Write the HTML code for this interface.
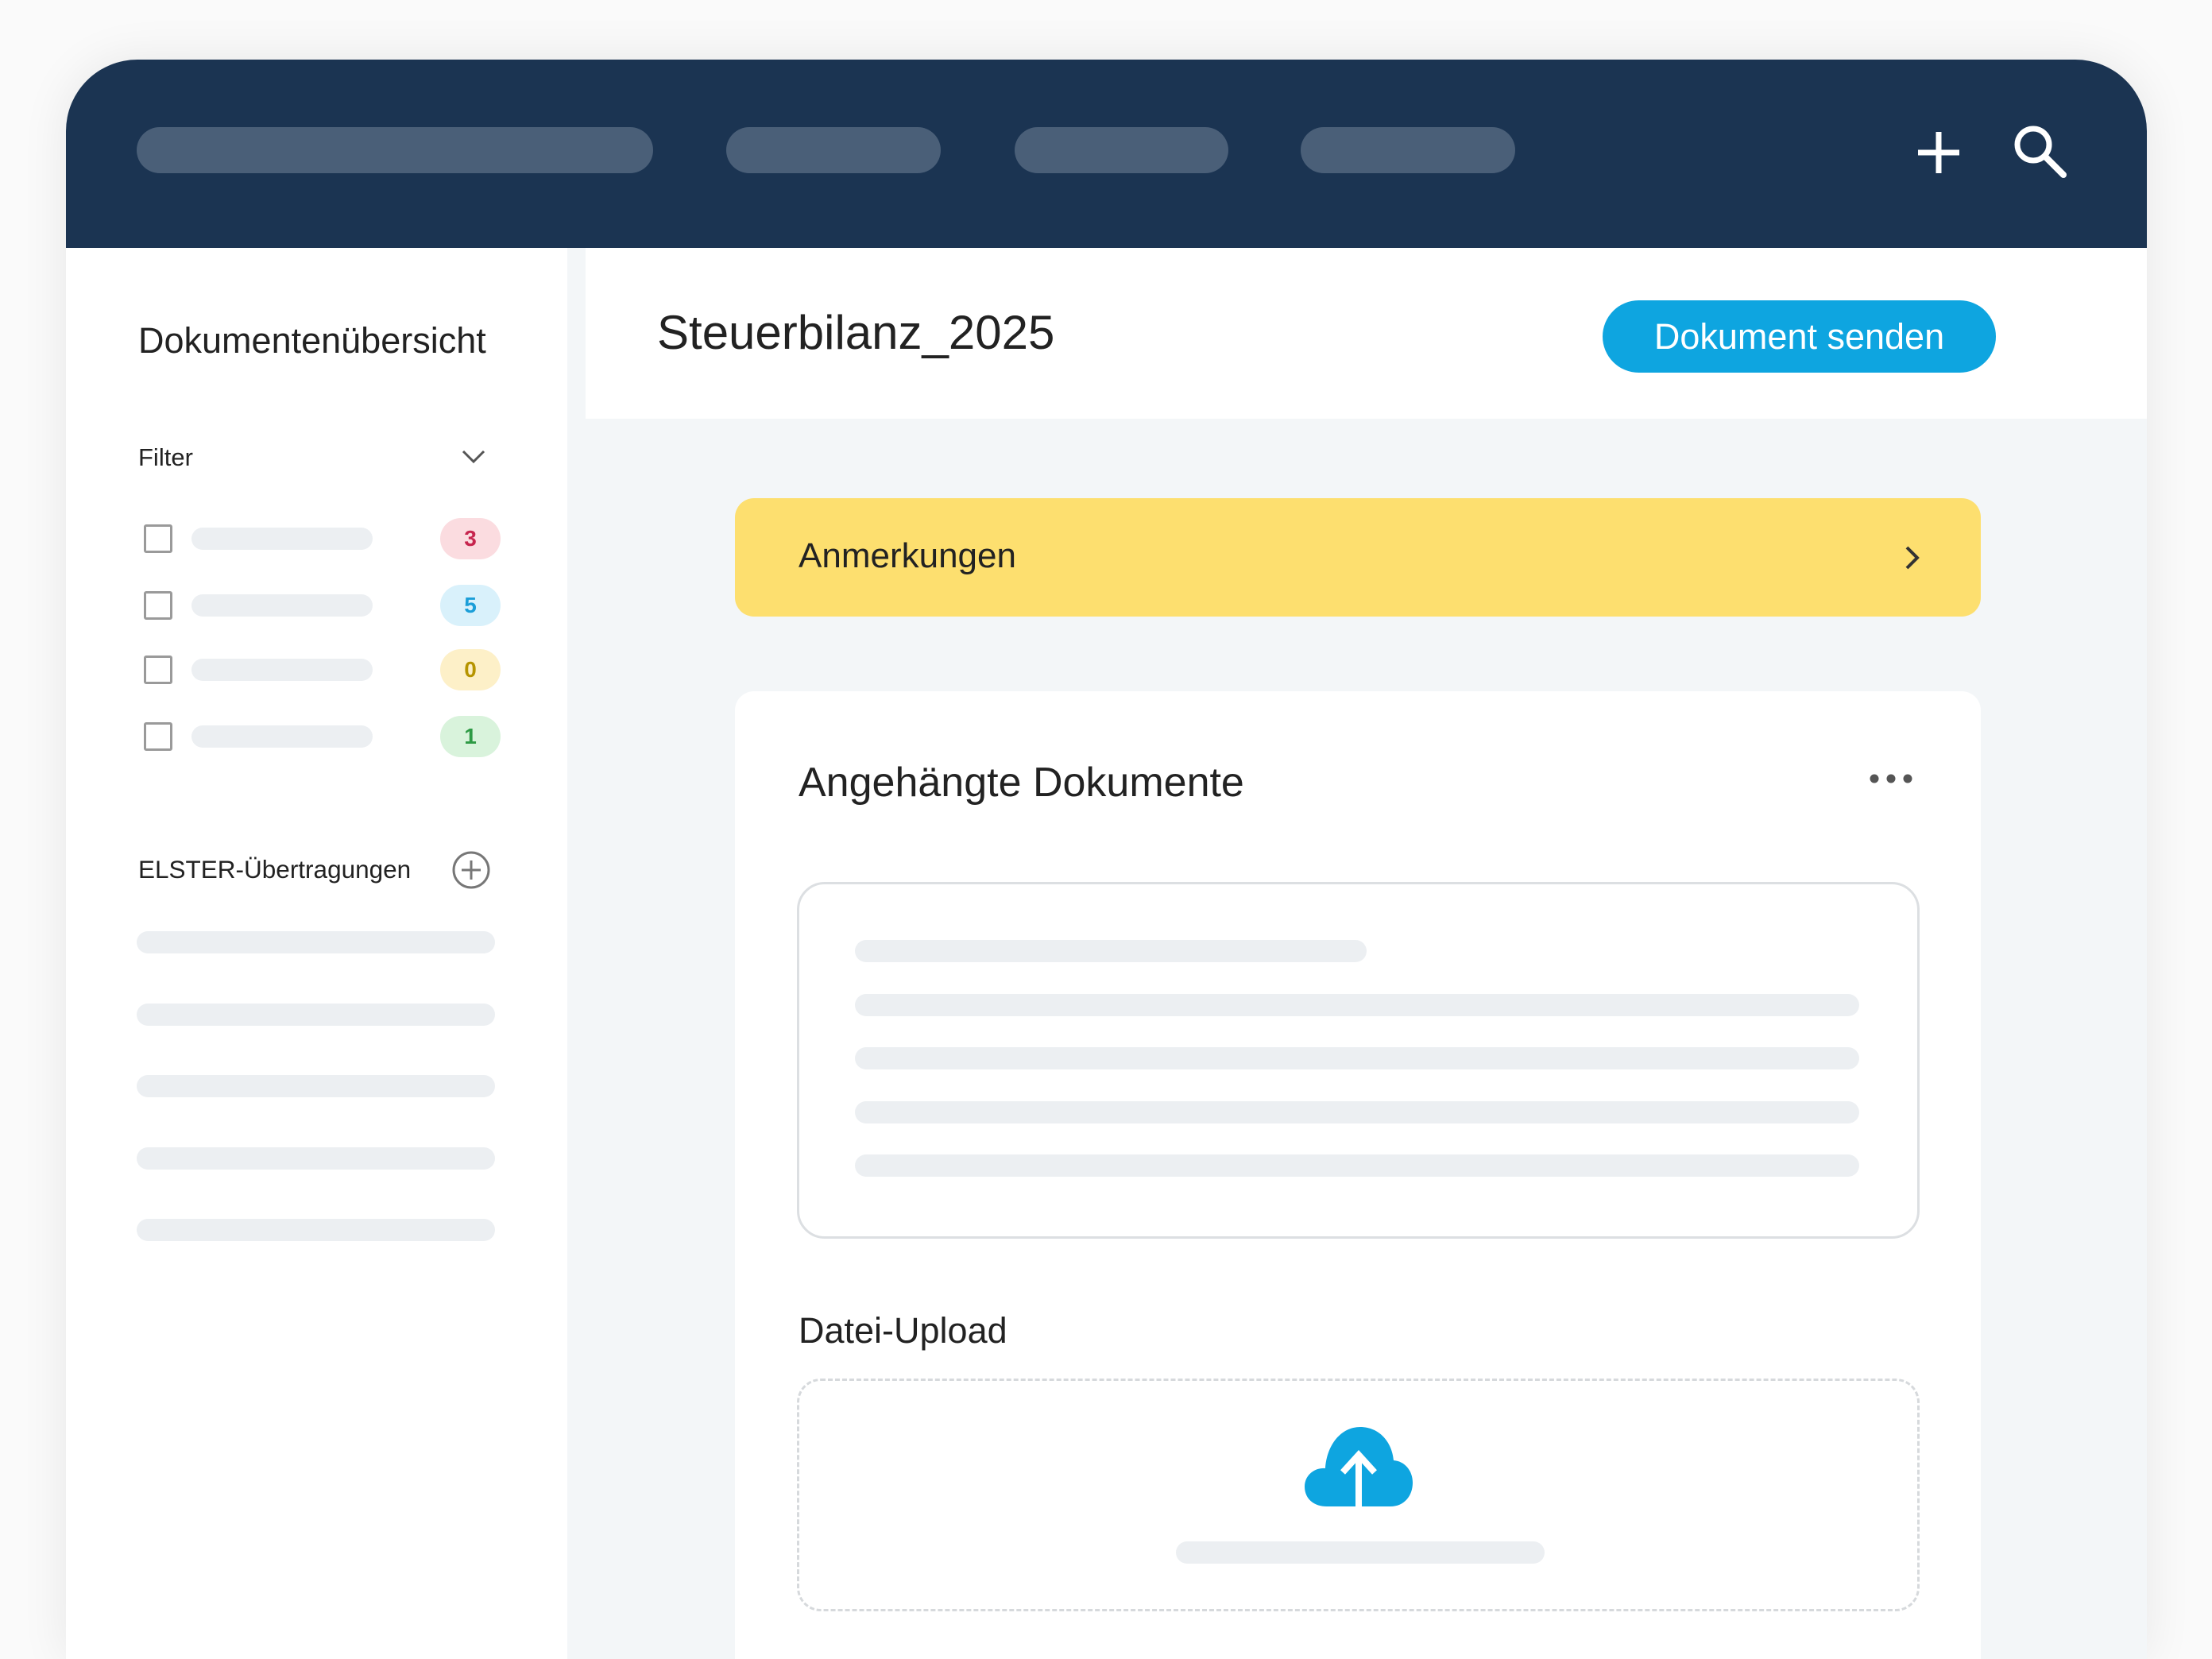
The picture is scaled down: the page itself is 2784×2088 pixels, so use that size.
<!DOCTYPE html>
<html><head><meta charset="utf-8"><style>
*{margin:0;padding:0;box-sizing:border-box}
html,body{width:2784px;height:2088px;overflow:hidden}
body{background:#fafafa;position:relative;font-family:"Liberation Sans",sans-serif;color:#222}
.abs{position:absolute}
.card{left:83px;top:75px;width:2619px;height:2013px;border-radius:90px 90px 0 0;background:#f3f6f8;box-shadow:0 0 60px rgba(0,0,0,.08);overflow:hidden}
.hdr{left:0;top:0;width:100%;height:237px;background:#1b3452}
.pill{background:#4a5f78;height:58px;border-radius:29px;top:85px}
.side{left:0;top:237px;width:631px;height:1776px;background:#fff}
.sk{background:#eceff2;border-radius:14px;height:28px}
.badge{width:76px;height:52px;border-radius:26px;font-weight:bold;font-size:28px;text-align:center;line-height:52px}
.cb{width:36px;height:36px;border:3px solid #9a9a9a;border-radius:3px}
</style></head><body>
<div class="abs card">
 <div class="abs hdr">
  <div class="abs pill" style="left:89px;width:650px"></div>
  <div class="abs pill" style="left:831px;width:270px"></div>
  <div class="abs pill" style="left:1194px;width:269px"></div>
  <div class="abs pill" style="left:1554px;width:270px"></div>
  <svg class="abs" style="left:2325px;top:85px" width="64" height="64" viewBox="0 0 64 64"><path d="M32 6V58M6 32H58" stroke="#fff" stroke-width="7"/></svg>
  <svg class="abs" style="left:2448px;top:79px" width="72" height="72" viewBox="0 0 72 72"><circle cx="28" cy="28" r="20" fill="none" stroke="#fff" stroke-width="7"/><path d="M43 43L66 66" stroke="#fff" stroke-width="8" stroke-linecap="round"/></svg>
 </div>
 <div class="abs side">
  <div class="abs" style="left:91px;top:91px;font-size:45px">Dokumentenübersicht</div>
  <div class="abs" style="left:91px;top:246px;font-size:31px">Filter</div>
  <svg class="abs" style="left:497px;top:253px" width="32" height="20" viewBox="0 0 32 20"><path d="M3 3L16 16L29 3" fill="none" stroke="#555" stroke-width="3"/></svg>
  <div class="abs cb" style="left:98px;top:348px"></div><div class="abs sk" style="left:158px;top:352px;width:228px"></div><div class="abs badge" style="left:471px;top:340px;background:#fbdce0;color:#c7254e">3</div>
  <div class="abs cb" style="left:98px;top:432px"></div><div class="abs sk" style="left:158px;top:436px;width:228px"></div><div class="abs badge" style="left:471px;top:424px;background:#d9f1fb;color:#1b9ed8">5</div>
  <div class="abs cb" style="left:98px;top:513px"></div><div class="abs sk" style="left:158px;top:517px;width:228px"></div><div class="abs badge" style="left:471px;top:505px;background:#fdf0c8;color:#b69400">0</div>
  <div class="abs cb" style="left:98px;top:597px"></div><div class="abs sk" style="left:158px;top:601px;width:228px"></div><div class="abs badge" style="left:471px;top:589px;background:#d9f3dc;color:#2e9a45">1</div>
  <div class="abs" style="left:91px;top:764px;font-size:31.5px">ELSTER-Übertragungen</div>
  <svg class="abs" style="left:484px;top:757px" width="52" height="52" viewBox="0 0 52 52"><circle cx="26" cy="26" r="22" fill="none" stroke="#777" stroke-width="3"/><path d="M26 14V38M14 26H38" stroke="#777" stroke-width="3"/></svg>
  <div class="abs sk" style="left:89px;top:860px;width:451px"></div>
  <div class="abs sk" style="left:89px;top:951px;width:451px"></div>
  <div class="abs sk" style="left:89px;top:1041px;width:451px"></div>
  <div class="abs sk" style="left:89px;top:1132px;width:451px"></div>
  <div class="abs sk" style="left:89px;top:1222px;width:451px"></div>
 </div>
 <div class="abs" style="left:654px;top:237px;width:1965px;height:215px;background:#fff">
  <div class="abs" style="left:90px;top:72px;font-size:60px">Steuerbilanz_2025</div>
  <div class="abs" style="left:1280px;top:66px;width:495px;height:91px;border-radius:46px;background:#0ea5e0;color:#fff;font-size:45px;text-align:center;line-height:91px">Dokument senden</div>
 </div>
 <div class="abs" style="left:842px;top:552px;width:1568px;height:149px;border-radius:24px;background:#fddf6f">
  <div class="abs" style="left:80px;top:48px;font-size:44px">Anmerkungen</div>
  <svg class="abs" style="left:1470px;top:57px" width="24" height="36" viewBox="0 0 24 36"><path d="M5 5L18 18L5 31" fill="none" stroke="#333" stroke-width="4"/></svg>
 </div>
 <div class="abs" style="left:842px;top:795px;width:1568px;height:1300px;border-radius:24px;background:#fff">
  <div class="abs" style="left:80px;top:85px;font-size:52px">Angehängte Dokumente</div>
  <svg class="abs" style="left:1425px;top:100px" width="60" height="20"><circle cx="9" cy="10" r="5.5" fill="#555"/><circle cx="30" cy="10" r="5.5" fill="#555"/><circle cx="51" cy="10" r="5.5" fill="#555"/></svg>
  <div class="abs" style="left:78px;top:240px;width:1413px;height:449px;border:3px solid #dcdfe2;border-radius:35px">
   <div class="abs sk" style="left:70px;top:70px;width:644px"></div>
   <div class="abs sk" style="left:70px;top:138px;width:1264px"></div>
   <div class="abs sk" style="left:70px;top:205px;width:1264px"></div>
   <div class="abs sk" style="left:70px;top:273px;width:1264px"></div>
   <div class="abs sk" style="left:70px;top:340px;width:1264px"></div>
  </div>
  <div class="abs" style="left:80px;top:779px;font-size:45px">Datei-Upload</div>
  <div class="abs" style="left:78px;top:865px;width:1413px;height:293px;border:3px dashed #d6d9dc;border-radius:30px">
   <svg class="abs" style="left:634px;top:55px" width="140" height="105" viewBox="0 0 140 105"><path d="M30 103C12 103 2 92 2 78C2 64 14 54 28 55C30 25 48 3 72 3C96 3 112 22 114 45C128 46 138 58 138 73C138 90 127 103 110 103Z" fill="#0ea5e0"/><path d="M70 103V38M50 60L70 38L90 60" fill="none" stroke="#fff" stroke-width="8"/></svg>
   <div class="abs sk" style="left:474px;top:202px;width:464px"></div>
  </div>
 </div>
</div>
</body></html>
